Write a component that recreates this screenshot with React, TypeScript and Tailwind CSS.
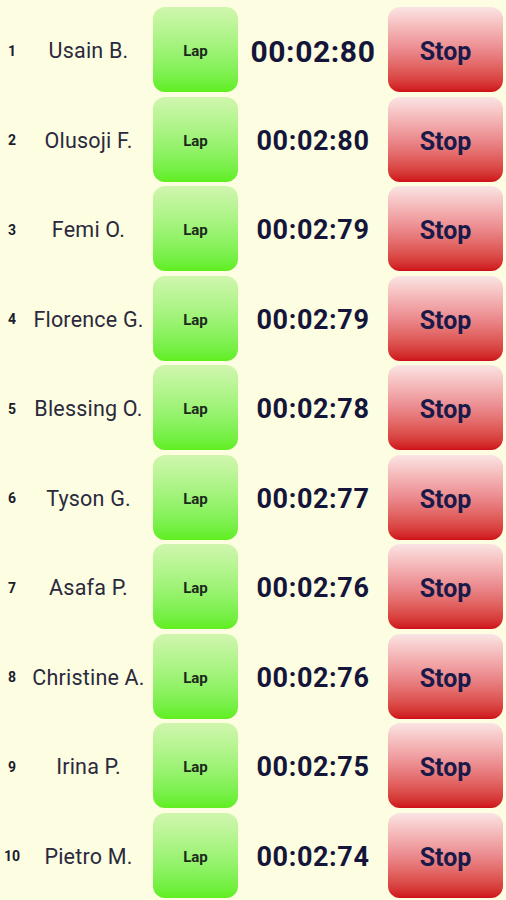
import React from 'react';

const runners = [
  { name: 'Usain B.', time: '00:02:80' },
  { name: 'Olusoji F.', time: '00:02:80' },
  { name: 'Femi O.', time: '00:02:79' },
  { name: 'Florence G.', time: '00:02:79' },
  { name: 'Blessing O.', time: '00:02:78' },
  { name: 'Tyson G.', time: '00:02:77' },
  { name: 'Asafa P.', time: '00:02:76' },
  { name: 'Christine A.', time: '00:02:76' },
  { name: 'Irina P.', time: '00:02:75' },
  { name: 'Pietro M.', time: '00:02:74' },
];

const App = () => {
  return (
    <div className="w-[506px] h-[900px] overflow-hidden bg-[#fdfde2] pt-[5px] font-['Roboto',sans-serif]">
      {runners.map((runner, i) => (
        <div
          key={runner.name}
          className="grid grid-cols-[24px_129px_85px_150px_115px] items-center h-[89.5px]"
        >
          <div className="pt-[3px] text-center text-[14px] font-bold text-[#1c1c2e]">{i + 1}</div>
          <div className="pt-[3px] text-center text-[21.5px] text-[#2a2a3c] whitespace-nowrap tracking-[0.2px]">
            {runner.name}
          </div>
          <button className="h-[85px] pt-[3px] rounded-[12px] bg-gradient-to-b from-[#d0f6ae] to-[#5fee1c] text-[15px] font-bold text-[#1c2a1c]">
            Lap
          </button>
          <div
            className={
              i === 0
                ? 'pt-[3px] text-center text-[30px] font-bold text-[#15153a] tracking-[0.6px]'
                : 'pt-[3px] text-center text-[27px] font-bold text-[#15153a] tracking-[0.6px]'
            }
          >
            {runner.time}
          </div>
          <button className="h-[85px] pt-[4px] rounded-[12px] bg-gradient-to-b from-[#fae4e4] via-[#eb8a8e] to-[#cf0c18] text-[25px] font-bold text-[#1a1a4a]">
            Stop
          </button>
        </div>
      ))}
    </div>
  );
};

export default App;
